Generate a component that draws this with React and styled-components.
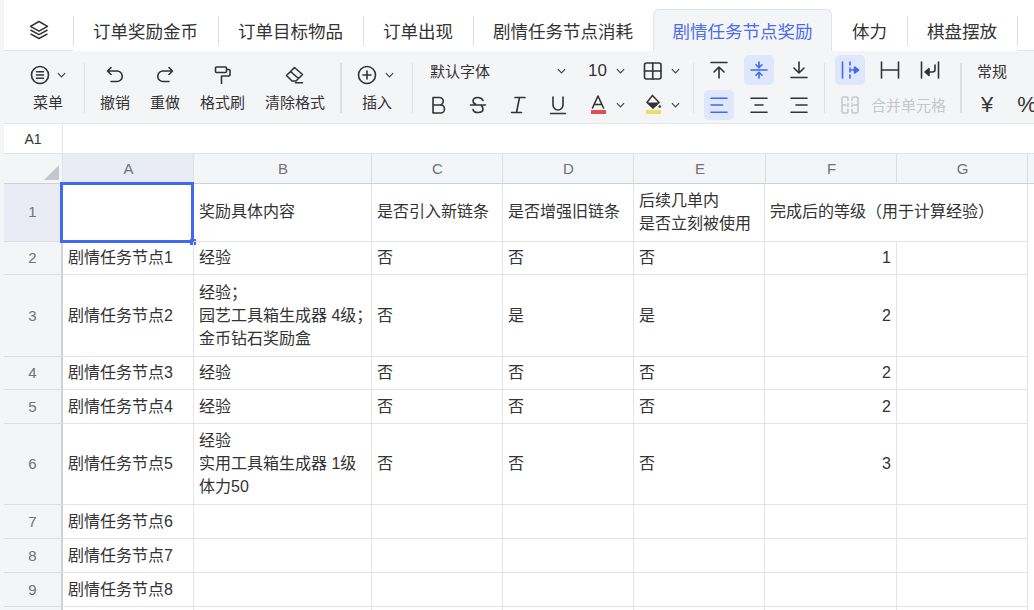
import styled, { createGlobalStyle } from 'styled-components'

const Global = createGlobalStyle`
  html, body { margin: 0; padding: 0; background: #f4f5f7; overflow: hidden; }
  * { box-sizing: border-box; }
  body { font-family: "Liberation Sans", "Noto Sans CJK SC", sans-serif; color: #333; }
`

const tabs = ['订单奖励金币', '订单目标物品', '订单出现', '剧情任务节点消耗', '剧情任务节点奖励', '体力', '棋盘摆放']
const ACTIVE_TAB = 4

const columns = [
  { name: 'A', head: 131, cell: 131 },
  { name: 'B', head: 178, cell: 178 },
  { name: 'C', head: 131, cell: 131 },
  { name: 'D', head: 131, cell: 131 },
  { name: 'E', head: 132, cell: 131 },
  { name: 'F', head: 131, cell: 132 },
  { name: 'G', head: 131, cell: 131 },
]

const blank = ['', '', '', '', '', '', '']

const rows = [
  { h: 58, cells: ['', '奖励具体内容', '是否引入新链条', '是否增强旧链条', '后续几单内\n是否立刻被使用', '完成后的等级（用于计算经验）', ''] },
  { h: 33, cells: ['剧情任务节点1', '经验', '否', '否', '否', '1', ''] },
  { h: 82, cells: ['剧情任务节点2', '经验；\n园艺工具箱生成器 4级；\n金币钻石奖励盒', '否', '是', '是', '2', ''] },
  { h: 33, cells: ['剧情任务节点3', '经验', '否', '否', '否', '2', ''] },
  { h: 34, cells: ['剧情任务节点4', '经验', '否', '否', '否', '2', ''] },
  { h: 81, cells: ['剧情任务节点5', '经验\n实用工具箱生成器 1级\n体力50', '否', '否', '否', '3', ''] },
  { h: 34, cells: ['剧情任务节点6', '', '', '', '', '', ''] },
  { h: 34, cells: ['剧情任务节点7', '', '', '', '', '', ''] },
  { h: 34, cells: ['剧情任务节点8', '', '', '', '', '', ''] },
  { h: 34, cells: blank, noLabel: true },
]

const Chevron = () => (
  <ChevronIcon viewBox="0 0 10 6"><path d="M1 1l4 4 4-4" /></ChevronIcon>
)

const Icon = ({ children, color }) => (
  <Svg viewBox="0 0 20 20" $color={color}>{children}</Svg>
)

export default function App() {
  return (
    <Page>
      <Global />
      <TabBar>
        <HomeTab>
          <svg width="20" height="20" viewBox="0 0 20 20" fill="none" stroke="#333" strokeWidth="1.5" strokeLinejoin="round">
            <path d="M10 1.5l8.500 4.800-8.500 4.800-8.500-4.800z" />
            <path d="M1.500 10l8.500 4.700 8.500-4.700M1.500 13.800l8.500 4.700 8.500-4.700" />
          </svg>
        </HomeTab>
        {tabs.map((t, i) => (
          <Tab key={t} $active={i === ACTIVE_TAB} $noLine={i === ACTIVE_TAB + 1}>{t}</Tab>
        ))}
        <TabRest />
      </TabBar>

      <Toolbar>
        <Group $w={80} $pad={26}>
          <BigTool>
            <IconLine $gap={7}>
              <Icon>
                <circle cx="10" cy="10" r="8.5" />
                <path d="M6.500 6.800h7M6.500 10h7M6.500 13.200h7" />
              </Icon>
              <Chevron />
            </IconLine>
            <span>菜单</span>
          </BigTool>
        </Group>
        <Divider />
        <Group $w={255} $gap={20} $pad={15}>
          <BigTool>
            <IconLine>
              <Icon><path d="M6 2.500L2.500 6 6 9.500M3 6h9a5 5 0 0 1 0 10.500H6" /></Icon>
            </IconLine>
            <span>撤销</span>
          </BigTool>
          <BigTool>
            <IconLine>
              <Icon><path d="M14 2.500L17.500 6 14 9.500M17 6H8a5 5 0 0 0 0 10.500h6" /></Icon>
            </IconLine>
            <span>重做</span>
          </BigTool>
          <BigTool>
            <IconLine>
              <Icon><path d="M3.500 2h9a1 1 0 0 1 1 1v3.500a1 1 0 0 1-1 1h-9a1 1 0 0 1-1-1V3a1 1 0 0 1 1-1zM13.500 4.500h2.500a1 1 0 0 1 1 1V10a1 1 0 0 1-1 1H8.500v7.500" /></Icon>
            </IconLine>
            <span>格式刷</span>
          </BigTool>
          <BigTool>
            <IconLine>
              <Icon><path d="M1.500 10.500L9.500 2.500l8 7-6.500 6.500H7zM5.500 6.500l8 7M10.500 17.800h7" /></Icon>
            </IconLine>
            <span>清除格式</span>
          </BigTool>
        </Group>
        <Divider $heavy />
        <Group $w={70} $center>
          <BigTool>
            <IconLine $lean>
              <Icon>
                <circle cx="10" cy="10" r="8.5" />
                <path d="M10 6v8M6 10h8" />
              </Icon>
              <Chevron />
            </IconLine>
            <span>插入</span>
          </BigTool>
        </Group>
        <Divider />

        <FontColumn>
          <FontLine>
            <FontName>默认字体</FontName>
            <Chevron />
            <FontSize>10</FontSize>
            <Chevron />
            <BorderTool>
              <Icon>
                <rect x="1.500" y="2" width="16.500" height="16" rx="2" />
                <path d="M9.750 2v16M1.500 10h16.500" />
              </Icon>
              <Chevron />
            </BorderTool>
          </FontLine>
          <StyleLine>
            <StyleBtn><Icon><path d="M5 2.500h6.500a3.700 3.700 0 0 1 0 7.500H5zM5 10h7.500a4 4 0 0 1 0 8H5z" /></Icon></StyleBtn>
            <StyleBtn><Icon><path d="M15 5.500C14 3 12 2.500 10 2.500 7.500 2.500 5 3.500 5 6c0 1.500 1 2.500 2.500 3M2.500 10h15M13.500 11c1 .7 1.500 1.500 1.500 3 0 2.500-2.500 3.500-5 3.500-2.200 0-4.500-.8-5-3" /></Icon></StyleBtn>
            <StyleBtn><Icon><path d="M7 2.500h10M3.500 17.500h10M11.500 2.500l-3 15" /></Icon></StyleBtn>
            <StyleBtn><Icon><path d="M5 2v8a5 5 0 0 0 10 0V2M2.500 18.500h15" /></Icon></StyleBtn>
            <ColorBtn>
              <Icon><path d="M4.500 14L10 2l5.500 12M6 10.500h8" /></Icon>
              <ColorBar $color="#d9534a" />
              <ChevronSlot><Chevron /></ChevronSlot>
            </ColorBtn>
            <ColorBtn>
              <svg width="20" height="20" viewBox="0 0 20 20">
                <path d="M9.500 1.500L16 8.500l-6 5.500-6-5.500z" fill="#fff" stroke="#333" strokeWidth="1.5" />
                <path d="M4 8.500h12l-6 5.500z" fill="#333" />
                <circle cx="16.800" cy="12.500" r="1.300" fill="#333" />
              </svg>
              <ColorBar $color="#f2de5c" />
              <ChevronSlot><Chevron /></ChevronSlot>
            </ColorBtn>
          </StyleLine>
        </FontColumn>
        <Divider />

        <AlignGrid>
          <SquareBtn><Icon><path d="M2 2.500h16M10 18V7M5 12l5-5 5 5" /></Icon></SquareBtn>
          <SquareBtn $on><Icon color="#3d6af0"><path d="M2 10h16M10 2v5.500M7 4.800l3 3 3-3M10 18v-5.500M7 15.200l3-3 3 3" /></Icon></SquareBtn>
          <SquareBtn><Icon><path d="M2 17.500h16M10 2v11M5 8l5 5 5-5" /></Icon></SquareBtn>
          <SquareBtn $on><Icon color="#3d6af0"><path d="M2 3.300h16M2 10h11.500M2 17.300h16" /></Icon></SquareBtn>
          <SquareBtn><Icon><path d="M2 3.300h16M6 10h8M2 17.300h16" /></Icon></SquareBtn>
          <SquareBtn><Icon><path d="M2 3.300h16M7 10h11M2 17.300h16" /></Icon></SquareBtn>
        </AlignGrid>
        <Divider />

        <MergeColumn>
          <MergeLine>
            <SquareBtn $on>
              <Icon color="#3d6af0">
                <path d="M2.500 2v16M10 2v3M10 8v4M10 15v3M11.500 10h5" />
                <path d="M14.500 7l4 3-4 3z" fill="#3d6af0" />
              </Icon>
            </SquareBtn>
            <SquareBtn><Icon><path d="M1.500 2v16M18.500 2v16M1.500 10h17" /></Icon></SquareBtn>
            <SquareBtn>
              <Icon>
                <path d="M1.500 2v16M18.500 2v16M15 5v4.500a2.500 2.500 0 0 1-2.500 2.500H8" />
                <path d="M9 8.500l-4 3.500 4 3.500z" fill="#333" />
              </Icon>
            </SquareBtn>
          </MergeLine>
          <MergeCell>
            <Icon color="#c4c7cc">
              <path d="M8 5.500V3.500a1.500 1.500 0 0 0-1.500-1.500h-3A1.500 1.500 0 0 0 2 3.500v13A1.500 1.500 0 0 0 3.500 18h3A1.500 1.500 0 0 0 8 16.500v-2M12 5.500V3.500A1.500 1.500 0 0 1 13.500 2h3A1.500 1.500 0 0 1 18 3.500v13a1.500 1.500 0 0 1-1.500 1.500h-3a1.500 1.500 0 0 1-1.500-1.500v-2M2 10h4M14 10h4M8 8.500v3M12 8.500v3" />
            </Icon>
            <span>合并单元格</span>
          </MergeCell>
        </MergeColumn>
        <Divider $heavy />

        <NumberColumn>
          <NumberName>常规</NumberName>
          <NumberLine>
            <NumberGlyph>¥</NumberGlyph>
            <NumberGlyph>%</NumberGlyph>
          </NumberLine>
        </NumberColumn>
      </Toolbar>

      <FormulaBar>
        <CellName>A1</CellName>
        <FormulaInput />
      </FormulaBar>

      <Sheet>
        <HeaderRow>
          <Corner><CornerMark /></Corner>
          {columns.map(c => (
            <ColHead key={c.name} $w={c.head} $on={c.name === 'A'}>{c.name}</ColHead>
          ))}
          <Filler />
        </HeaderRow>
        {rows.map((r, i) => (
          <Row key={i} $h={r.h}>
            <RowHead $on={i === 0} $first={i === 0}>{r.noLabel ? '' : i + 1}</RowHead>
            {r.cells.map((c, j) => (
              <Cell
                key={j}
                $w={columns[j].cell}
                $num={j === 5 && i > 0}
                $spill={j === 5 && i === 0}
                $first={i === 0}
              >
                {c}
                {i === 0 && j === 0 && <Selection><Handle /></Selection>}
              </Cell>
            ))}
            <Filler />
          </Row>
        ))}
      </Sheet>
    </Page>
  )
}

const Page = styled.div`
  width: 1034px;
  height: 610px;
  overflow: hidden;
  background: #f4f5f7;
`

const TabBar = styled.div`
  display: flex;
  height: 51px;
  margin-left: 4px;
  background: #fff;
`

const HomeTab = styled.div`
  width: 69px;
  height: 51px;
  flex: none;
  display: flex;
  align-items: center;
  justify-content: center;
  padding: 9px 0 0 1px;
  border-bottom: 1px solid #e3e5e8;
`

const Tab = styled.div`
  position: relative;
  flex: none;
  height: 42px;
  margin-top: 9px;
  padding: 0 ${p => (p.$active ? '18.5px' : '20px')};
  display: flex;
  align-items: center;
  font-size: 17.5px;
  white-space: nowrap;
  color: ${p => (p.$active ? '#4a6cf0' : '#333')};
  background: ${p => (p.$active ? '#f4f5f7' : '#fff')};
  border: ${p => (p.$active ? '1px solid #e1e3e6' : 'none')};
  border-bottom: none;
  border-radius: ${p => (p.$active ? '6px 6px 0 0' : '0')};
  &::before {
    content: '';
    display: ${p => (p.$active || p.$noLine ? 'none' : 'block')};
    position: absolute;
    left: 0;
    top: 7px;
    height: 30px;
    width: 1px;
    background: #dcdee1;
  }
`

const TabRest = styled.div`
  position: relative;
  flex: 1;
  border-bottom: 1px solid #e3e5e8;
  &::before {
    content: '';
    position: absolute;
    left: 0;
    top: 16px;
    height: 30px;
    width: 1px;
    background: #dcdee1;
  }
`

const Toolbar = styled.div`
  height: 73px;
  display: flex;
  align-items: flex-start;
  margin-left: 4px;
  background: #f4f5f7;
  border-bottom: 1px solid #e3e5e8;
  overflow: hidden;
`

const Group = styled.div`
  width: ${p => p.$w}px;
  flex: none;
  display: flex;
  justify-content: ${p => (p.$center ? 'center' : 'flex-start')};
  gap: ${p => p.$gap || 0}px;
  padding-left: ${p => p.$pad || 0}px;
`

const Divider = styled.div`
  flex: none;
  width: ${p => (p.$heavy ? 2 : 1)}px;
  height: 50px;
  margin-top: 12px;
  background: ${p => (p.$heavy ? '#dcdee1' : '#dfe1e4')};
`

const BigTool = styled.div`
  flex: none;
  display: flex;
  flex-direction: column;
  align-items: center;
  padding-top: 13px;
  font-size: 15px;
  color: #333;
  white-space: nowrap;
  span { margin-top: 7px; line-height: 20px; }
`

const IconLine = styled.div`
  height: 22px;
  display: flex;
  align-items: center;
  gap: ${p => p.$gap || 8}px;
  margin-right: ${p => (p.$lean ? 3 : 0)}px;
`

const Svg = styled.svg`
  width: 20px;
  height: 20px;
  flex: none;
  fill: none;
  stroke: ${p => p.$color || '#333'};
  stroke-width: 1.6;
  stroke-linecap: round;
  stroke-linejoin: round;
  display: block;
`

const ChevronIcon = styled.svg`
  width: 9px;
  height: 6px;
  flex: none;
  fill: none;
  stroke: #444;
  stroke-width: 1.3;
  display: block;
`

const FontColumn = styled.div`
  width: 280px;
  flex: none;
  padding-left: 17px;
  display: flex;
  flex-direction: column;
`

const FontLine = styled.div`
  height: 39px;
  display: flex;
  align-items: center;
`

const FontName = styled.div`
  width: 127px;
  font-size: 15px;
  flex: none;
`

const FontSize = styled.div`
  width: 19px;
  margin: 0 9px 0 22px;
  font-size: 17px;
  flex: none;
`

const BorderTool = styled.div`
  display: flex;
  align-items: center;
  gap: 8px;
  margin-left: 18px;
`

const StyleLine = styled.div`
  display: flex;
  align-items: center;
  height: 30px;
  margin-left: -2px;
`

const StyleBtn = styled.div`
  width: 40px;
  flex: none;
`

const ColorBtn = styled.div`
  position: relative;
  width: 55px;
  flex: none;
  height: 30px;
  padding-top: 4px;
`

const ColorBar = styled.div`
  position: absolute;
  left: 3px;
  top: 20px;
  width: 15px;
  height: 4px;
  background: ${p => p.$color};
`

const ChevronSlot = styled.div`
  position: absolute;
  left: 28px;
  top: 12px;
`

const AlignGrid = styled.div`
  width: 130px;
  flex: none;
  padding: 4px 0 0 10px;
  display: grid;
  grid-template-columns: repeat(3, 30px);
  grid-auto-rows: 30px;
  column-gap: 10px;
  row-gap: 5px;
`

const SquareBtn = styled.div`
  width: 30px;
  height: 30px;
  border-radius: 5px;
  background: ${p => (p.$on ? '#dfe7fd' : 'transparent')};
  display: flex;
  align-items: center;
  justify-content: center;
`

const MergeColumn = styled.div`
  width: 135px;
  flex: none;
  padding: 4px 0 0 10px;
  display: flex;
  flex-direction: column;
  gap: 5px;
`

const MergeLine = styled.div`
  display: flex;
  gap: 10px;
`

const MergeCell = styled.div`
  height: 30px;
  display: flex;
  align-items: center;
  gap: 11px;
  padding-left: 5px;
  color: #c4c7cc;
  font-size: 15px;
  white-space: nowrap;
  span { margin-bottom: 2px; }
`

const NumberColumn = styled.div`
  padding-left: 15px;
  display: flex;
  flex-direction: column;
  flex: none;
`

const NumberName = styled.div`
  font-size: 15px;
  height: 39px;
  display: flex;
  align-items: center;
`

const NumberLine = styled.div`
  display: flex;
  gap: 24px;
  padding-left: 4px;
  height: 30px;
  align-items: center;
`

const NumberGlyph = styled.div`
  font-size: 22px;
  color: #333;
`

const FormulaBar = styled.div`
  height: 30px;
  display: flex;
  margin-left: 4px;
  background: #fff;
  border-bottom: 1px solid #e3e5e8;
`

const CellName = styled.div`
  width: 59px;
  border-right: 1px solid #e3e5e8;
  font-size: 14px;
  display: flex;
  align-items: center;
  justify-content: center;
`

const FormulaInput = styled.div`
  flex: 1;
`

const Sheet = styled.div`
  margin-left: 4px;
  background: #fff;
`

const HeaderRow = styled.div`
  display: flex;
  height: 30px;
  background: #f4f5f7;
  border-bottom: 1px solid #d0d2d6;
`

const Corner = styled.div`
  width: 59px;
  flex: none;
  position: relative;
  border-right: 1px solid #e3e5e8;
`

const CornerMark = styled.div`
  position: absolute;
  right: 3px;
  bottom: 3px;
  width: 0;
  height: 0;
  border-style: solid;
  border-width: 0 0 15px 15px;
  border-color: transparent transparent #c4c7cb transparent;
`

const ColHead = styled.div`
  width: ${p => p.$w}px;
  flex: none;
  display: flex;
  align-items: center;
  justify-content: center;
  padding-left: 1px;
  font-size: 15px;
  color: #6f7277;
  background: ${p => (p.$on ? '#e9ecf4' : '#f4f5f7')};
  border-right: 1px solid #dcdee1;
`

const Filler = styled.div`
  flex: 1;
`

const Row = styled.div`
  display: flex;
  height: ${p => p.$h}px;
`

const RowHead = styled.div`
  width: 59px;
  flex: none;
  display: flex;
  align-items: center;
  justify-content: center;
  padding-bottom: ${p => (p.$first ? 2 : 1)}px;
  font-size: 15px;
  color: #6f7277;
  background: ${p => (p.$on ? '#e9ecf4' : '#f4f5f7')};
  border-right: 2px solid #d0d2d6;
  border-bottom: 1px solid #dcdee1;
`

const Cell = styled.div`
  position: relative;
  width: ${p => p.$w}px;
  flex: none;
  display: flex;
  align-items: center;
  justify-content: ${p => (p.$num ? 'flex-end' : 'flex-start')};
  padding: 0 5px ${p => (p.$first ? 2 : 1)}px;
  font-size: 16px;
  line-height: 23px;
  color: #333;
  white-space: pre;
  border-right: 1px solid ${p => (p.$spill ? 'transparent' : '#e1e3e6')};
  border-bottom: 1px solid #e1e3e6;
`

const Selection = styled.div`
  position: absolute;
  left: -3px;
  top: -2px;
  right: -1px;
  bottom: -2px;
  border: 3px solid #3d6af0;
`

const Handle = styled.div`
  position: absolute;
  right: -5px;
  bottom: -5px;
  width: 6px;
  height: 6px;
  background: #3d6af0;
`
